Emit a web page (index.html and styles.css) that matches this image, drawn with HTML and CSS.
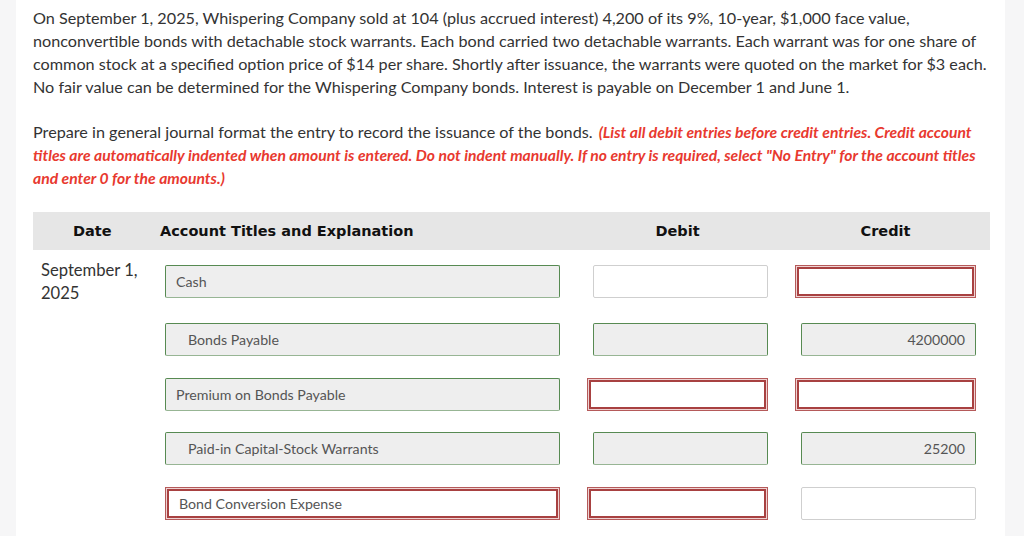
FILE: index.html
```html
<!DOCTYPE html>
<html>
<head>
<meta charset="utf-8">
<link rel="stylesheet" href="styles.css">
</head>
<body>
<div class="page">
  <main class="content">
    <p class="intro">On September 1, 2025, Whispering Company sold at 104 (plus accrued interest) 4,200 of its 9%, 10-year, $1,000 face value, nonconvertible bonds with detachable stock warrants. Each bond carried two detachable warrants. Each warrant was for one share of common stock at a specified option price of $14 per share. Shortly after issuance, the warrants were quoted on the market for $3 each. No fair value can be determined for the Whispering Company bonds. Interest is payable on December 1 and June 1.</p>
    <p class="prompt">Prepare in general journal format the entry to record the issuance of the bonds. <em class="note">(List all debit entries before credit entries. Credit account titles are automatically indented when amount is entered. Do not indent manually. If no entry is required, select "No Entry" for the account titles and enter 0 for the amounts.)</em></p>

    <div class="journal">
      <div class="jhead">
        <div class="h-date">Date</div>
        <div class="h-acct">Account Titles and Explanation</div>
        <div class="h-num">Debit</div>
        <div class="h-num">Credit</div>
      </div>

      <div class="jrow first">
        <div class="date">September 1,<br>2025</div>
        <div class="field ok">Cash</div>
        <div class="field amt blank"></div>
        <div class="field amt err wide"></div>
      </div>
      <div class="jrow second">
        <div class="date"></div>
        <div class="field ok indent">Bonds Payable</div>
        <div class="field amt ok"></div>
        <div class="field amt ok num">4200000</div>
      </div>
      <div class="jrow">
        <div class="date"></div>
        <div class="field ok">Premium on Bonds Payable</div>
        <div class="field amt err wide"></div>
        <div class="field amt err wide"></div>
      </div>
      <div class="jrow">
        <div class="date"></div>
        <div class="field ok indent">Paid-in Capital-Stock Warrants</div>
        <div class="field amt ok"></div>
        <div class="field amt ok num">25200</div>
      </div>
      <div class="jrow">
        <div class="date"></div>
        <div class="field err">Bond Conversion Expense</div>
        <div class="field amt err wide"></div>
        <div class="field amt blank"></div>
      </div>
    </div>
  </main>
</div>
</body>
</html>
```

FILE: styles.css
```css
html, body {
  margin: 0;
  padding: 0;
  background: #f6f6f7;
}
body {
  font-family: Lato, "Open Sans", sans-serif;
  color: #333;
}
.page {
  padding: 0 19px 0 16px;
  height: 536px;
  overflow: hidden;
}
.content {
  background: #fff;
  height: 536px;
  padding: 6px 15px 0 17px;
  box-sizing: border-box;
}
.intro, .prompt {
  margin: 0;
  font-size: 16.2px;
  line-height: 23px;
  color: #333;
}
.prompt {
  margin-top: 22px;
}
.note {
  color: #e8392f;
  font-weight: bold;
  font-style: italic;
  font-size: 15.7px;
  line-height: 16px;
  margin-left: 2px;
}
.journal {
  margin-top: 23px;
}
.jhead, .jrow {
  display: grid;
  grid-template-columns: 132px 395px 208px 208px;
  padding-right: 14px;
}
.jhead {
  background: #e6e6e6;
  height: 38px;
  align-items: center;
  font-family: "DejaVu Sans", Verdana, sans-serif;
  font-weight: bold;
  font-size: 14.5px;
  color: #111;
}
.h-date { padding-left: 40px; }
.h-acct { margin-left: -5px; white-space: nowrap; }
.h-num {
  justify-self: end;
  width: 175px;
  text-align: center;
  margin-right: 3px;
}
.jrow {
  margin-top: 21.5px;
  align-items: start;
}
.jrow.first {
  margin-top: 15px;
}
.jrow.second {
  margin-top: 25px;
}
.date {
  height: 33px;
  font-size: 16.6px;
  line-height: 23px;
  padding-left: 8px;
  margin-top: -6px;
  color: #333;
  white-space: nowrap;
}
.field {
  height: 33px;
  box-sizing: border-box;
  font-size: 14.2px;
  color: #555;
  display: flex;
  align-items: center;
  padding: 0 10px;
  white-space: nowrap;
}
.field.amt {
  justify-self: end;
  width: 175px;
  padding-right: 10px;
}
.field.ok {
  background: #eeeeee;
  border: 1px solid #578a52;
  border-bottom-color: #97b594;
  border-radius: 2px;
}
.field.indent { padding-left: 22px; }
.field.num { justify-content: flex-end; }
.field.blank {
  background: #fff;
  border: 1px solid #cfcfcf;
  border-radius: 2px;
}
.field.err {
  background: #fff;
  border: 1px solid #b55a5a;
  box-shadow: inset 0 0 0 1px #efd3d3, inset 0 0 0 3px #a84141;
  padding-left: 13px;
}
.field.amt.wide {
  width: 181px;
}
```
